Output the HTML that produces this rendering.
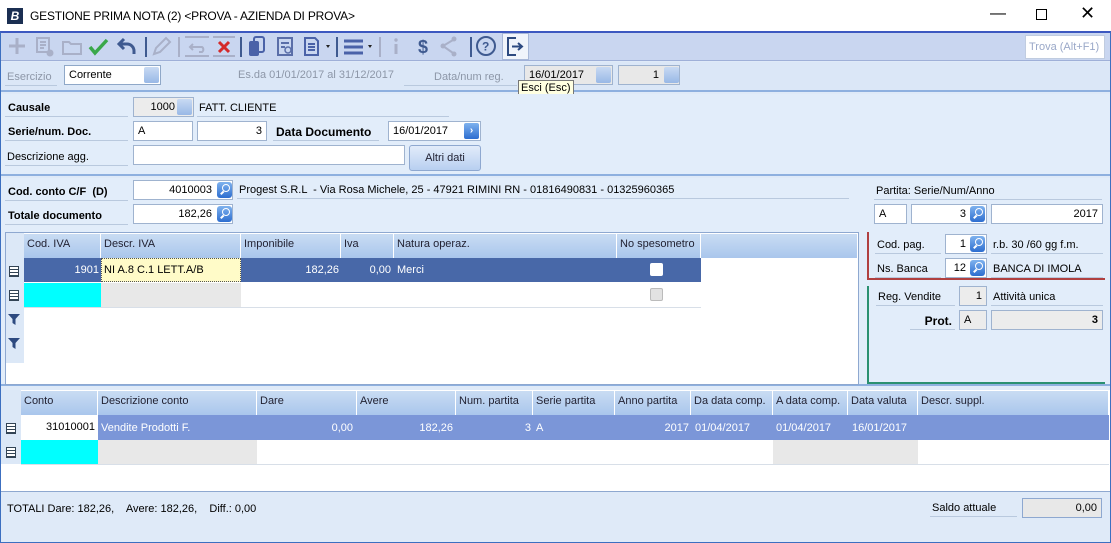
<!DOCTYPE html>
<html><head><meta charset="utf-8"><style>
*{box-sizing:border-box;margin:0;padding:0}
body{width:1111px;height:543px;overflow:hidden;font-family:"Liberation Sans",sans-serif;font-size:11px;color:#000;background:#dfeaf8;position:relative}
.a{position:absolute;white-space:nowrap}
.inp{position:absolute;background:#fff;border:1px solid #9fb3cf;height:20px;line-height:19px;padding:0 4px}
.r{text-align:right}
.lbl{position:absolute;border-bottom:1px solid #b9c9de;height:21px;line-height:24px;padding-left:2px}
.b{font-weight:bold}
.mag{position:absolute;width:15px;height:16px;border-radius:3px;background:linear-gradient(#7fb2ee,#2d6ed0);}
.mag:after{content:"";position:absolute;left:5px;top:2px;width:6px;height:6px;border:1.5px solid #fff;border-radius:50%}
.mag:before{content:"";position:absolute;left:3px;top:10px;width:4px;height:1.5px;background:#fff;transform:rotate(-45deg)}
.hd{position:absolute;height:22px;background:linear-gradient(#c9dcf3,#a9c6ec);border-right:1px solid #fff;line-height:20px;padding-left:3px;color:#223}
.ic{position:absolute;width:10px;height:11px;border:1px solid #345;background:repeating-linear-gradient(#fff 0 2px,#345 2px 3px)}
</style></head><body>
<div class="a" style="left:0;top:0;width:1111px;height:31px;background:#fff"></div>
<div class="a" style="left:7px;top:8px;width:16px;height:16px;background:#1b2f52;color:#fff;font-weight:bold;font-style:italic;font-size:12px;line-height:16px;text-align:center">B</div>
<div class="a" style="left:30px;top:9px;font-size:12px;letter-spacing:-0.2px">GESTIONE PRIMA NOTA (2) &lt;PROVA - AZIENDA DI PROVA&gt;</div>
<div class="a" style="left:990px;top:5px;font-size:16px">&#8212;</div>
<div class="a" style="left:1036px;top:9px;width:11px;height:11px;border:1px solid #000"></div>
<div class="a" style="left:1080px;top:3px;font-size:18px">&#10005;</div>
<div class="a" style="left:0;top:31px;width:1111px;height:512px;border:1px solid #3c6fc0;border-top:2px solid #3c58c0"></div>
<div class="a" style="left:1px;top:33px;width:1109px;height:28px;background:#c9d6f0;border-bottom:1px solid #9fb0d8"></div>
<svg class="a" style="left:0;top:33px" width="540" height="28" viewBox="0 0 540 28">
<g fill="none" stroke-width="2.5">
<path d="M17 5v16M9 13h16" stroke="#a9b0c8" stroke-width="3"/>
<path d="M37 5h12v14H37z M40 9h6M40 12h6M40 15h4" stroke="#a9b0c8" stroke-width="2"/>
<circle cx="50" cy="20" r="3.5" fill="#a9b0c8" stroke="none"/>
<path d="M63 9h6l2 2h10v10H63z" stroke="#a9b0c8" stroke-width="2"/>
<path d="M90 14l5 6 12-13" stroke="#3aa84a" stroke-width="3.5"/>
<path d="M120 11h7a7 7 0 0 1 7 7v3 M124 6l-5 5 5 5" stroke="#3f5a90" stroke-width="3"/>
<path d="M146 4v20" stroke="#3f5a90" stroke-width="2"/>
<path d="M154 21l2-6 10-10 4 4-10 10z" stroke="#a9b0c8" stroke-width="2"/>
<path d="M179 4v20" stroke="#a9b0c8" stroke-width="2"/>
<path d="M185 4h24M185 23h24 M190 14h12a3 3 0 0 1 0 5h-3 M193 11l-3 3 3 3" stroke="#a9b0c8" stroke-width="2"/>
<path d="M213 4h22M213 23h22" stroke="#a9b0c8" stroke-width="2"/>
<path d="M219 9l10 10M229 9l-10 10" stroke="#d42a2a" stroke-width="3"/>
<path d="M241 4v20" stroke="#3f5a90" stroke-width="2"/>
<rect x="249" y="8" width="10" height="15" rx="2" fill="#4a62a8" stroke="none"/>
<rect x="254" y="4" width="10" height="15" rx="2" stroke="#4a62a8" stroke-width="2"/>
<path d="M278 5h14v17h-14z M281 10h8M281 14h4" stroke="#5a6ea8" stroke-width="2"/>
<circle cx="288" cy="17" r="3" stroke="#5a6ea8" stroke-width="1.5"/>
<path d="M305 5h10l3 3v14h-13z M308 11h7M308 14h7M308 17h7" stroke="#4a62a8" stroke-width="2"/>
<path d="M326 12l2 3 2-3z" fill="#222" stroke="none"/>
<path d="M337 4v20" stroke="#3f5a90" stroke-width="2"/>
<path d="M344 8h19M344 14h19M344 20h19" stroke="#4a62a8" stroke-width="3"/>
<path d="M368 12l2 3 2-3z" fill="#222" stroke="none"/>
<path d="M380 4v20" stroke="#a9b0c8" stroke-width="2"/>
<path d="M396 11v10" stroke="#a9b0c8" stroke-width="3"/><circle cx="396" cy="7" r="1.7" fill="#a9b0c8" stroke="none"/>
<path d="M443 13l10-6M443 13l10 7" stroke="#a9b0c8" stroke-width="2"/>
<circle cx="443" cy="13" r="2.5" fill="#a9b0c8" stroke="none"/><circle cx="454" cy="6" r="2.5" fill="#a9b0c8" stroke="none"/><circle cx="454" cy="21" r="2.5" fill="#a9b0c8" stroke="none"/>
<path d="M471 4v20" stroke="#3f5a90" stroke-width="2"/>
<circle cx="486" cy="13" r="9" stroke="#3f5a90" stroke-width="2"/>
</g>
<text x="418" y="20" font-family="Liberation Sans" font-weight="bold" font-size="18" fill="#3f5a90">$</text>
<text x="482" y="17.5" font-family="Liberation Sans" font-weight="bold" font-size="12" fill="#3f5a90">?</text>
<rect x="502.5" y="0.5" width="26" height="26" fill="#f0f4fb" stroke="#a8b8d8"/>
<path d="M516 5h-8v17h8 M512 13.5h9 M518 10l4 3.5-4 3.5" fill="none" stroke="#2d4a80" stroke-width="2"/>
</svg>
<div class="a" style="left:1025px;top:35px;width:80px;height:24px;background:#fff;border:1px solid #c0cce0;color:#9aa8c8;line-height:22px;padding-left:3px">Trova (Alt+F1)</div>
<div class="a" style="left:1px;top:62px;width:1109px;height:30px;background:#dbe7f7;border-bottom:2px solid #8eb0df"></div>
<div class="lbl" style="left:5px;top:65px;width:52px;color:#8d97a8">Esercizio</div>
<div class="inp" style="left:64px;top:65px;width:97px;border-color:#8fa8c8">Corrente</div>
<div class="a" style="left:144px;top:67px;width:15px;height:16px;background:linear-gradient(#c8daf3,#98b8e6);border-radius:2px"></div>
<div class="a" style="left:238px;top:69px;color:#8d97a8">Es.da 01/01/2017 al 31/12/2017</div>
<div class="lbl" style="left:404px;top:65px;width:113px;color:#8d97a8;padding-left:30px">Data/num reg.</div>
<div class="inp" style="left:524px;top:65px;width:89px;background:#e8e8e8">16/01/2017</div>
<div class="a" style="left:596px;top:67px;width:15px;height:16px;background:linear-gradient(#c8daf3,#98b8e6);border-radius:2px"></div>
<div class="inp r" style="left:618px;top:65px;width:62px;background:#e8e8e8;padding-right:20px">1</div>
<div class="a" style="left:664px;top:67px;width:15px;height:16px;background:linear-gradient(#c8daf3,#98b8e6);border-radius:2px"></div>
<div class="a" style="left:518px;top:80px;background:#ffffe1;border:1px solid #777;padding:0 2px;height:16px;line-height:14px">Esci (Esc)</div>
<div class="a" style="left:1px;top:94px;width:1109px;height:82px;background:#e2edfa;border-bottom:2px solid #8eb0df"></div>
<div class="lbl b" style="left:5px;top:96px;width:123px;padding-left:3px">Causale</div>
<div class="inp r" style="left:133px;top:97px;width:61px;background:#ececec;padding-right:18px">1000</div>
<div class="a" style="left:177px;top:99px;width:15px;height:16px;background:linear-gradient(#c8daf3,#98b8e6);border-radius:2px"></div>
<div class="lbl" style="left:197px;top:96px;width:252px">FATT. CLIENTE</div>
<div class="lbl b" style="left:5px;top:120px;width:123px;padding-left:3px">Serie/num. Doc.</div>
<div class="inp" style="left:133px;top:121px;width:60px">A</div>
<div class="inp r" style="left:197px;top:121px;width:70px">3</div>
<div class="lbl b" style="left:273px;top:120px;width:106px;padding-left:3px;font-size:12px">Data Documento</div>
<div class="inp" style="left:388px;top:121px;width:93px">16/01/2017</div>
<div class="a" style="left:464px;top:123px;width:15px;height:16px;background:linear-gradient(#7fb2ee,#2d6ed0);border-radius:2px;color:#fff;text-align:center;font-size:10px;line-height:16px;font-weight:bold">&#8250;</div>
<div class="lbl" style="left:5px;top:145px;width:123px">Descrizione agg.</div>
<div class="inp" style="left:133px;top:145px;width:272px"></div>
<div class="a" style="left:409px;top:145px;width:72px;height:26px;border:1px solid #8ea8d0;border-radius:3px;background:linear-gradient(#e2ecfa,#b8cff0);text-align:center;line-height:24px;color:#223">Altri dati</div>
<div class="a" style="left:1px;top:178px;width:1109px;height:208px;background:#e2edfa;border-bottom:2px solid #8eb0df"></div>
<div class="lbl b" style="left:5px;top:180px;width:123px;padding-left:3px">Cod. conto C/F &nbsp;(D)</div>
<div class="inp r" style="left:133px;top:180px;width:100px;padding-right:20px">4010003</div>
<div class="mag" style="left:217px;top:182px"></div>
<div class="lbl" style="left:237px;top:178px;width:612px">Progest S.R.L &nbsp;- Via Rosa Michele, 25 - 47921 RIMINI RN - 01816490831 - 01325960365</div>
<div class="lbl b" style="left:5px;top:204px;width:123px;padding-left:3px">Totale documento</div>
<div class="inp r" style="left:133px;top:204px;width:100px;padding-right:20px">182,26</div>
<div class="mag" style="left:217px;top:206px"></div>
<div class="lbl" style="left:874px;top:179px;width:228px">Partita: Serie/Num/Anno</div>
<div class="inp" style="left:874px;top:204px;width:33px">A</div>
<div class="inp r" style="left:911px;top:204px;width:76px;padding-right:20px">3</div>
<div class="mag" style="left:970px;top:206px"></div>
<div class="inp r" style="left:991px;top:204px;width:112px">2017</div>
<div class="a" style="left:867px;top:232px;width:238px;height:48px;border-left:2px solid #b04040;border-bottom:2px solid #b04040"></div>
<div class="lbl" style="left:875px;top:233px;width:66px">Cod. pag.</div>
<div class="inp r" style="left:945px;top:234px;width:42px;padding-right:20px">1</div>
<div class="mag" style="left:970px;top:236px"></div>
<div class="lbl" style="left:991px;top:233px;width:112px">r.b. 30 /60 gg f.m.</div>
<div class="lbl" style="left:875px;top:257px;width:66px">Ns. Banca</div>
<div class="inp r" style="left:945px;top:258px;width:42px;padding-right:20px">12</div>
<div class="mag" style="left:970px;top:260px"></div>
<div class="lbl" style="left:991px;top:257px;width:112px">BANCA DI IMOLA</div>
<div class="a" style="left:867px;top:286px;width:238px;height:98px;border-left:2px solid #2a9070;border-bottom:2px solid #2a9070"></div>
<div class="lbl" style="left:876px;top:285px;width:79px">Reg. Vendite</div>
<div class="inp r" style="left:959px;top:286px;width:28px;background:#ececec">1</div>
<div class="lbl" style="left:991px;top:285px;width:112px">Attività unica</div>
<div class="lbl b r" style="left:910px;top:309px;width:45px;padding-right:3px;font-size:12px">Prot.</div>
<div class="inp" style="left:959px;top:310px;width:28px;background:#ececec">A</div>
<div class="inp r b" style="left:991px;top:310px;width:112px;background:#ececec">3</div>
<div class="a" style="left:5px;top:232px;width:854px;height:153px;background:#fff;border:1px solid #8ea8d0"></div>
<div class="a" style="left:6px;top:233px;width:18px;height:130px;background:#dce8f7"></div>
<div class="hd" style="left:24px;top:234px;width:77px;height:24px;line-height:20px">Cod. IVA</div>
<div class="hd" style="left:101px;top:234px;width:140px;height:24px">Descr. IVA</div>
<div class="hd" style="left:241px;top:234px;width:100px;height:24px">Imponibile</div>
<div class="hd" style="left:341px;top:234px;width:53px;height:24px">Iva</div>
<div class="hd" style="left:394px;top:234px;width:223px;height:24px">Natura operaz.</div>
<div class="hd" style="left:617px;top:234px;width:84px;height:24px">No spesometro</div>
<div class="hd" style="left:701px;top:234px;width:157px;height:24px"></div>
<div class="a" style="left:24px;top:258px;width:677px;height:24px;background:#4868a8"></div>
<div class="a r" style="left:24px;top:264px;width:75px;color:#fff">1901</div>
<div class="a" style="left:101px;top:258px;width:140px;height:24px;background:#fffbc8;border:1px dotted #555;line-height:22px;padding-left:2px">NI A.8 C.1 LETT.A/B</div>
<div class="a r" style="left:241px;top:264px;width:98px;color:#fff">182,26</div>
<div class="a r" style="left:341px;top:264px;width:50px;color:#fff">0,00</div>
<div class="a" style="left:397px;top:264px;color:#fff">Merci</div>
<div class="a" style="left:650px;top:263px;width:13px;height:13px;background:#fff;border-radius:2px"></div>
<div class="a" style="left:24px;top:283px;width:77px;height:24px;background:#00ffff"></div>
<div class="a" style="left:101px;top:283px;width:140px;height:24px;background:#e8e8e8"></div>
<div class="a" style="left:24px;top:307px;width:677px;border-bottom:1px solid #d8dfe8"></div>
<div class="a" style="left:650px;top:288px;width:13px;height:13px;background:#e2e2e2;border:1px solid #bbb;border-radius:2px"></div>
<div class="ic" style="left:9px;top:266px"></div>
<div class="ic" style="left:9px;top:290px"></div>
<svg class="a" style="left:8px;top:313px" width="12" height="40"><path d="M0 1h12l-4.5 5v6l-3-2v-4z M0 25h12l-4.5 5v6l-3-2v-4z" fill="#2d4a80"/></svg>
<div class="a" style="left:1px;top:390px;width:1109px;height:102px;background:#fff;border-bottom:1px solid #8ea8d0"></div>
<div class="a" style="left:1px;top:390px;width:20px;height:74px;background:#dce8f7"></div>
<div class="hd" style="left:21px;top:391px;width:77px;height:24px">Conto</div>
<div class="hd" style="left:98px;top:391px;width:159px;height:24px">Descrizione conto</div>
<div class="hd" style="left:257px;top:391px;width:100px;height:24px">Dare</div>
<div class="hd" style="left:357px;top:391px;width:99px;height:24px">Avere</div>
<div class="hd" style="left:456px;top:391px;width:77px;height:24px">Num. partita</div>
<div class="hd" style="left:533px;top:391px;width:82px;height:24px">Serie partita</div>
<div class="hd" style="left:615px;top:391px;width:76px;height:24px">Anno partita</div>
<div class="hd" style="left:691px;top:391px;width:82px;height:24px">Da data comp.</div>
<div class="hd" style="left:773px;top:391px;width:75px;height:24px">A data comp.</div>
<div class="hd" style="left:848px;top:391px;width:70px;height:24px">Data valuta</div>
<div class="hd" style="left:918px;top:391px;width:191px;height:24px">Descr. suppl.</div>
<div class="a" style="left:21px;top:415px;width:1088px;height:25px;background:#7b96d8"></div>
<div class="a r" style="left:21px;top:415px;width:77px;height:25px;background:#fff;line-height:25px;padding-right:3px">31010001</div>
<div class="a" style="left:101px;top:422px;color:#fff">Vendite Prodotti F.</div>
<div class="a r" style="left:257px;top:422px;width:96px;color:#fff">0,00</div>
<div class="a r" style="left:357px;top:422px;width:96px;color:#fff">182,26</div>
<div class="a r" style="left:456px;top:422px;width:75px;color:#fff">3</div>
<div class="a" style="left:536px;top:422px;color:#fff">A</div>
<div class="a r" style="left:615px;top:422px;width:74px;color:#fff">2017</div>
<div class="a" style="left:695px;top:422px;color:#fff">01/04/2017</div>
<div class="a" style="left:776px;top:422px;color:#fff">01/04/2017</div>
<div class="a" style="left:852px;top:422px;color:#fff">16/01/2017</div>
<div class="a" style="left:21px;top:440px;width:77px;height:24px;background:#00ffff"></div>
<div class="a" style="left:98px;top:440px;width:159px;height:24px;background:#e8e8e8"></div>
<div class="a" style="left:773px;top:440px;width:145px;height:24px;background:#e8e8e8"></div>
<div class="a" style="left:21px;top:464px;width:1088px;border-bottom:1px solid #d8dfe8"></div>
<div class="ic" style="left:6px;top:423px"></div>
<div class="ic" style="left:6px;top:447px"></div>
<div class="a" style="left:7px;top:503px">TOTALI Dare: 182,26, &nbsp;&nbsp; Avere: 182,26, &nbsp;&nbsp; Diff.: 0,00</div>
<div class="lbl" style="left:930px;top:496px;width:87px">Saldo attuale</div>
<div class="inp r" style="left:1022px;top:498px;width:80px;background:#e8e8e8;border-color:#8ea8d0">0,00</div>
</body></html>
